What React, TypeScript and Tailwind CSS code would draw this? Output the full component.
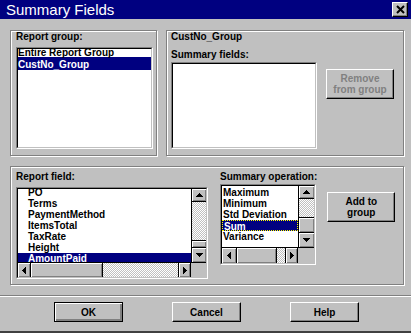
import React from 'react';

type Dir = 'up' | 'down' | 'left' | 'right';

const Arrow: React.FC<{ dir: Dir }> = ({ dir }) => {
  if (dir === 'up' || dir === 'down') {
    return (
      <svg width="7" height="4" viewBox="0 0 7 4" shapeRendering="crispEdges">
        <polygon points={dir === 'up' ? '0,4 7,4 3.5,0' : '0,0 7,0 3.5,4'} fill="#000" />
      </svg>
    );
  }
  return (
    <svg width="4" height="7" viewBox="0 0 4 7" shapeRendering="crispEdges">
      <polygon points={dir === 'left' ? '4,0 4,7 0,3.5' : '0,0 0,7 4,3.5'} fill="#000" />
    </svg>
  );
};

// raised little box used for scroll arrows and thumbs
const Knob: React.FC<{ className: string; children?: React.ReactNode }> = ({ className, children }) => (
  <div
    className={`bg-[#c0c0c0] shadow-[inset_1px_1px_0_#fff,inset_-1px_-1px_0_#808080] flex items-center justify-center shrink-0 ${className}`}
  >
    {children}
  </div>
);

const Checker: React.FC<{ className: string }> = ({ className }) => (
  <div
    className={`bg-[image:repeating-conic-gradient(#c0c0c0_0%_25%,#ffffff_0%_50%)] bg-[length:2px_2px] ${className}`}
  />
);

const Label: React.FC<{ className?: string; children: React.ReactNode }> = ({ className = '', children }) => (
  <div className={`text-[10px] font-bold leading-[12px] whitespace-nowrap ${className}`}>{children}</div>
);

const Group: React.FC<{ className: string; children: React.ReactNode }> = ({ className, children }) => (
  <div className={`border border-[#808080] shadow-[inset_1px_1px_0_#fff,1px_1px_0_#fff] ${className}`}>
    {children}
  </div>
);

// sunken list frame: grey/white outside, black/light grey inside
const Sunken: React.FC<{ className: string; children?: React.ReactNode }> = ({ className, children }) => (
  <div className={`border border-t-[#808080] border-l-[#808080] border-b-white border-r-white shrink-0 ${className}`}>
    <div className="h-full border border-t-black border-l-black border-b-[#c0c0c0] border-r-[#c0c0c0] bg-white flex flex-col overflow-hidden">
      {children}
    </div>
  </div>
);

const Button: React.FC<{ className: string; disabled?: boolean; isDefault?: boolean; children: React.ReactNode }> = ({
  className,
  disabled,
  isDefault,
  children,
}) => (
  <div
    className={`bg-[#c0c0c0] flex items-center justify-center text-center text-[10px] font-bold leading-[11px] shrink-0 ${
      isDefault
        ? 'border border-black shadow-[inset_1px_1px_0_#fff,inset_-2px_-2px_0_#808080]'
        : 'border border-t-white border-l-white border-b-black border-r-black shadow-[inset_-1px_-1px_0_#808080]'
    } ${disabled ? 'text-[#808080]' : 'text-black'} ${className}`}
  >
    <div>{children}</div>
  </div>
);

const reportFields = ['PO', 'Terms', 'PaymentMethod', 'ItemsTotal', 'TaxRate', 'Height', 'AmountPaid'];
const operations = ['Maximum', 'Minimum', 'Std Deviation', 'Sum', 'Variance'];

export default function App() {
  return (
    <div className="w-[411px] h-[333px] bg-[#c0c0c0] flex flex-col border-b-2 border-b-[#404040] font-['Liberation_Sans',Arial,sans-serif] text-black overflow-hidden">
      {/* Title bar */}
      <div className="h-[19px] shrink-0 bg-[#000080] flex items-center justify-between pl-[6px] pr-[3px]">
        <span className="text-white text-[15px] leading-[19px]">Summary Fields</span>
        <div className="w-[16px] h-[15px] bg-[#c0c0c0] border border-t-white border-l-white border-b-black border-r-black shadow-[inset_-1px_-1px_0_#808080] flex items-center justify-center">
          <svg width="9" height="9" viewBox="0 0 9 9">
            <path d="M1 1 L8 8 M8 1 L1 8" stroke="#000" strokeWidth="2" />
          </svg>
        </div>
      </div>

      <div className="pl-[10px] pr-[7px] pt-[11px]">
        <div className="flex gap-[9px] h-[126px]">
          {/* Report group */}
          <Group className="w-[147px] pl-[5px]">
            <Label>Report group:</Label>
            <Sunken className="mt-[4px] w-[137px] h-[102px]">
              <div className="-mt-[4px] text-[10px] font-bold whitespace-nowrap">
                <div className="h-[12px] leading-[16px]">Entire Report Group</div>
                <div className="h-[13px] leading-[16px] bg-[#000080] text-white">CustNo_Group</div>
              </div>
            </Sunken>
          </Group>

          {/* Current group */}
          <Group className="flex-1 pl-[4px]">
            <Label>CustNo_Group</Label>
            <Label className="mt-[6px]">Summary fields:</Label>
            <div className="flex items-start mt-[1px]">
              <Sunken className="w-[146px] h-[87px]" />
              <Button className="ml-[9px] mt-[7px] w-[68px] h-[30px]" disabled>
                Remove
                <br />
                from group
              </Button>
            </div>
          </Group>
        </div>

        <Group className="mt-[10px] h-[119px] pt-[4px] pl-[5px] flex items-start">
          {/* Report field */}
          <div>
            <Label>Report field:</Label>
            <Sunken className="mt-[4px] w-[192px] h-[92px]">
              <div className="flex flex-1 min-h-0">
                <div className="flex-1 overflow-hidden">
                  <div className="-mt-[2px] text-[10px] font-bold whitespace-nowrap">
                    {reportFields.map((f) => (
                      <div
                        key={f}
                        className={`h-[11px] leading-[11px] pl-[10px] ${f === 'AmountPaid' ? 'bg-[#000080] text-white' : ''}`}
                      >
                        {f}
                      </div>
                    ))}
                  </div>
                </div>
                <div className="w-[15px] border-l border-black bg-[#c0c0c0] flex flex-col">
                  <Knob className="h-[13px] border-b border-black">
                    <Arrow dir="up" />
                  </Knob>
                  <div className="flex-1 flex flex-col justify-end">
                    <Checker className="flex-1" />
                    <Knob className="h-[8px] border-t border-b border-black" />
                  </div>
                  <Knob className="h-[14px]">
                    <Arrow dir="down" />
                  </Knob>
                </div>
              </div>
              <div className="h-[15px] shrink-0 border-t border-black flex">
                <Knob className="w-[13px] border-r border-black">
                  <Arrow dir="left" />
                </Knob>
                <Knob className="w-[72px] border-r border-black" />
                <Checker className="flex-1" />
                <Knob className="w-[13px] border-l border-r border-black">
                  <Arrow dir="right" />
                </Knob>
                <div className="w-[15px] bg-[#c0c0c0]" />
              </div>
            </Sunken>
          </div>

          {/* Summary operation */}
          <div className="ml-[12px]">
            <Label>Summary operation:</Label>
            <Sunken className="mt-[1px] w-[96px] h-[81px]">
              <div className="flex flex-1 min-h-0">
                <div className="flex-1 overflow-hidden pt-[1px] text-[10px] font-bold whitespace-nowrap">
                  {operations.map((op) => (
                    <div
                      key={op}
                      className={`h-[11px] leading-[11px] pl-[1px] ${
                        op === 'Sum' ? 'bg-[#000080] text-white border border-dotted border-[#ffff00] leading-[9px] pl-0' : ''
                      }`}
                    >
                      {op}
                    </div>
                  ))}
                </div>
                <div className="w-[16px] border-l border-black bg-[#c0c0c0] flex flex-col">
                  <Knob className="h-[13px] border-b border-black">
                    <Arrow dir="up" />
                  </Knob>
                  <Checker className="h-[18px] shrink-0" />
                  <Knob className="h-[16px] border-t border-b border-black" />
                  <Knob className="flex-1">
                    <Arrow dir="down" />
                  </Knob>
                </div>
              </div>
              <div className="h-[16px] shrink-0 border-t border-black flex">
                <Knob className="w-[15px] border-r border-black">
                  <Arrow dir="left" />
                </Knob>
                <Knob className="w-[40px] border-r border-black" />
                <Checker className="flex-1" />
                <Knob className="w-[13px] border-l border-r border-black">
                  <Arrow dir="right" />
                </Knob>
                <div className="w-[16px] bg-[#c0c0c0]" />
              </div>
            </Sunken>
          </div>

          <Button className="ml-[10px] mt-[21px] w-[68px] h-[30px]">
            Add to
            <br />
            group
          </Button>
        </Group>
      </div>

      <div className="mt-[10px] h-[2px] shrink-0 border-t border-t-[#808080] border-b border-b-white" />

      <div className="flex pl-[54px] gap-[49px] pt-[5px]">
        <Button className="w-[69px] h-[20px]" isDefault>
          OK
        </Button>
        <Button className="w-[69px] h-[20px]">Cancel</Button>
        <Button className="w-[69px] h-[20px]">Help</Button>
      </div>
    </div>
  );
}
